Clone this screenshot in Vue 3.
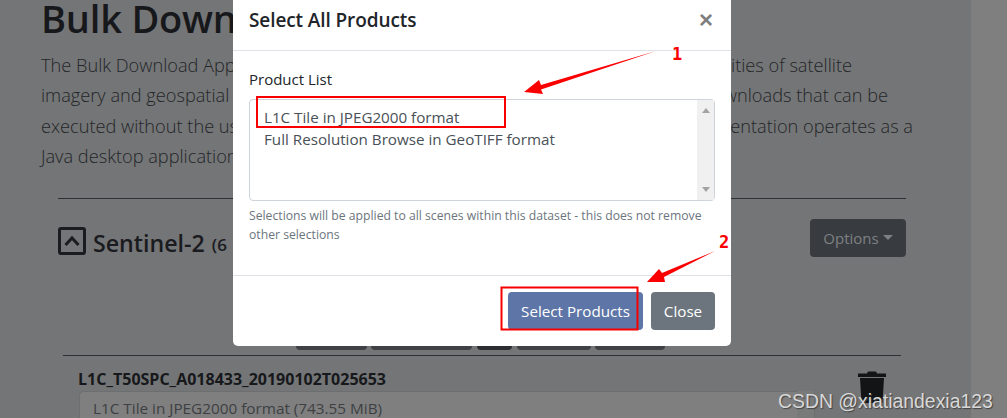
<script setup>
const lines = [
  { left: 'The Bulk Download Application extends', right: 'capabilities of satellite', rc: 'r1' },
  { left: 'imagery and geospatial data through', right: 'downloads that can be', rc: 'r2' },
  { left: 'executed without the use of a browser.', right: 'implementation operates as a', rc: 'r3' },
  { left: 'Java desktop application.', right: '', rc: 'r4' },
]
const chips = ['c1', 'c2', 'c3', 'c4', 'c5']
</script>

<template>
  <div class="screen">
    <main class="page">
      <h1 class="title">Bulk Download Application</h1>
      <div class="lead">
        <div v-for="l in lines" :key="l.left" class="lead-line" :class="l.rc">
          <span>{{ l.left }}</span><span>{{ l.right }}</span>
        </div>
      </div>
      <section class="dataset">
        <div class="dataset-head">
          <div class="dataset-name">
            <span class="toggle">
              <svg width="18" height="12" viewBox="0 0 18 12"><path d="M2.5 10 L9 3 L15.5 10" fill="none" stroke="#1b1c20" stroke-width="3"/></svg>
            </span>
            <span class="name-text">Sentinel-2</span>
            <span class="count">(6 scenes)</span>
          </div>
          <button class="options">Options<i class="caret"></i></button>
        </div>
        <div class="chips">
          <span v-for="c in chips" :key="c" class="chip" :class="c"></span>
        </div>
        <div class="scene">
          <div class="scene-main">
            <div class="scene-id">L1C_T50SPC_A018433_20190102T025653</div>
            <div class="scene-box">
              <span>L1C Tile in JPEG2000 format (743.55 MiB)</span>
              <span class="scene-bar"></span>
            </div>
          </div>
          <svg class="trash" width="28" height="32" viewBox="0 0 28 32">
            <path d="M0 2.5 H9 L10 0.5 H18 L19 2.5 H28 V6 H0 Z M2 7 H26 L24.5 32 H3.5 Z" fill="#131416"/>
          </svg>
        </div>
      </section>
    </main>
    <aside class="gutter"></aside>

    <div class="modal">
      <header class="modal-head">
        <h5>Select All Products</h5>
        <span class="close">×</span>
      </header>
      <div class="modal-body">
        <div class="label">Product List</div>
        <div class="list">
          <div class="list-items">
            <div>L1C Tile in JPEG2000 format</div>
            <div>Full Resolution Browse in GeoTIFF format</div>
          </div>
          <div class="sb">
            <i class="up"></i>
            <i class="down"></i>
          </div>
        </div>
        <small class="help">Selections will be applied to all scenes within this dataset - this does not remove other selections</small>
      </div>
      <footer class="modal-foot">
        <button class="btn primary">Select Products</button>
        <button class="btn secondary">Close</button>
      </footer>
    </div>

    <svg class="marks" width="1007" height="418" viewBox="0 0 1007 418">
      <rect x="257" y="97" width="248" height="30" fill="none" stroke="#f80000" stroke-width="2"/>
      <polygon points="656,51 541,85 539,80 524,92 543,94 541,89.5" fill="#fb0000"/>
      <text x="672" y="60" class="num">1</text>
      <rect x="501.5" y="287.5" width="136" height="42" fill="none" stroke="#f80000" stroke-width="2"/>
      <polygon points="715,251 662,273 659,269 647,282 665,282 664,277" fill="#fb0000"/>
      <text x="719" y="248" class="num">2</text>
    </svg>

    <div class="watermark">CSDN @xiatiandexia123</div>
  </div>
</template>

<style>
html, body { margin: 0; overflow: hidden; }
</style>

<style scoped>
.screen {
  position: relative;
  width: 1007px;
  height: 418px;
  overflow: hidden;
  display: flex;
  font-family: "Open Sans", "Noto Sans", sans-serif;
  background: #747576;
}
.page { width: 971px; flex: none; padding-left: 41px; box-sizing: border-box; }
.gutter { flex: 1; background: #7f7f7f; }
.title {
  margin: -6px 0 8px;
  font-size: 38px;
  line-height: 48px;
  font-weight: 600;
  color: #17181b;
  white-space: nowrap;
  letter-spacing: -0.2px;
}
.lead { width: 872px; color: #232529; font-size: 18.2px; font-weight: 300; line-height: 30.4px; }
.lead-line { display: flex; justify-content: space-between; white-space: nowrap; }
.r1 { width: 811px; }
.r2 { width: 847px; }
.r3 { width: 872px; }
.dataset { width: 848px; margin: 26px 0 0 17px; border-top: 1px solid #2e3034; }
.dataset-head { display: flex; justify-content: space-between; padding-top: 20px; }
.dataset-name { display: flex; align-items: center; height: 38px; padding-top: 9px; box-sizing: border-box; }
.toggle {
  width: 28px; height: 28px; box-sizing: border-box;
  border: 3px solid #1b1c20; border-radius: 3px;
  display: flex; align-items: center; justify-content: center;
  margin-right: 7px; margin-top: -3px;
}
.name-text { font-size: 23.2px; font-weight: 600; color: #1a1b1f; margin: 1px 7px 0 0; white-space: nowrap; }
.count { font-size: 17px; font-weight: 600; color: #1a1b1f; margin-top: 4px; white-space: nowrap; word-spacing: 6px; }
.options {
  width: 96px; height: 38px; border: 0; border-radius: 4px; padding: 0;
  background: #383b3f; color: #7d8083;
  font: 15px "Open Sans", sans-serif;
  display: flex; align-items: center; justify-content: center;
}
.caret {
  width: 0; height: 0; margin-left: 4px;
  border: 5px solid transparent; border-top-color: #7d8083; border-bottom: 0;
}
.chips { display: flex; margin: 55px 0 0 238px; gap: 4px; height: 38px; }
.chip { height: 38px; border-radius: 4px; background: #3f4145; }
.c1 { width: 71px; }
.c2 { width: 101px; }
.c3 { width: 35px; margin-left: 1px; background: #2c2d30; }
.c4 { width: 74px; margin-left: 1px; }
.c5 { width: 70px; }
.scene {
  margin: 5px 5px 0;
  border-top: 1px solid #2e3034;
  display: flex;
  padding: 13px 0 0 16px;
}
.scene-main { width: 736px; }
.scene-id { font-size: 16px; line-height: 20px; font-weight: 700; color: #17181b; white-space: nowrap; margin-left: -1px; }
.scene-box {
  margin-top: 2px;
  height: 36px;
  box-sizing: border-box;
  padding: 5px 0 0 13px;
  background: #7f7f7f;
  border: 1px solid #6d6e6f;
  border-radius: 4px 0 0 0;
  color: #3d3f43;
  font-size: 15.3px;
  line-height: 22px;
  display: flex;
  justify-content: space-between;
  white-space: nowrap;
}
.scene-bar { width: 17px; margin-top: -6px; background: #797a7a; }
.trash { margin: 2px 0 0 43px; flex: none; }

.modal {
  position: absolute;
  left: 233px;
  top: -11px;
  width: 498px;
  background: #fff;
  border-radius: 5px;
  color: #212529;
}
.modal-head {
  height: 62px; box-sizing: border-box; padding: 16px;
  border-bottom: 1px solid #dee2e6;
  display: flex; justify-content: space-between;
}
.modal-head h5 { margin: 0; font-size: 19px; line-height: 30px; font-weight: 600; white-space: nowrap; letter-spacing: -0.1px; }
.close { font: 700 24px/30px "Liberation Sans", sans-serif; color: #7f7f7f; margin: 0 2px 0 0; }
.modal-body { padding: 16px 16px 30.6px; }
.label { font-size: 15px; line-height: 24px; margin-bottom: 8px; }
.list {
  height: 102px; box-sizing: border-box;
  border: 1px solid #ced4da; border-radius: 4px;
  display: flex; justify-content: space-between;
  color: #495057; font-size: 15.2px; line-height: 22px;
}
.list-items { padding: 6px 0 0 14px; white-space: nowrap; }
.sb { width: 17px; background: #f0f0f0; display: flex; flex-direction: column; justify-content: space-between; align-items: center; padding: 8px 0; box-sizing: border-box; }
.up { width: 0; height: 0; border: 4px solid transparent; border-bottom: 5px solid #a3a3a3; border-top: 0; }
.down { width: 0; height: 0; border: 4px solid transparent; border-top: 5px solid #a3a3a3; border-bottom: 0; }
.help { display: block; margin-top: 5px; font-size: 12.2px; line-height: 19.2px; color: #6c757d; width: 465px; }
.modal-foot {
  border-top: 1px solid #dee2e6;
  padding: 16px;
  display: flex; justify-content: flex-end; gap: 8px;
}
.btn {
  height: 38px; border: 0; border-radius: 4px; padding: 0;
  color: #fff; font: 15.2px "Open Sans", sans-serif;
}
.primary { width: 135px; background: #5e75a7; }
.secondary { width: 64px; background: #6c757d; }

.marks { position: absolute; left: 0; top: 0; pointer-events: none; }
.num { font: 700 17px "DejaVu Sans Mono", monospace; fill: #fb0000; }
.watermark {
  position: absolute; left: 778px; top: 390px;
  font: 19.4px/22px "Liberation Sans", sans-serif;
  color: #d8d8d8;
  text-shadow: 1px 1px 1px #444;
  white-space: nowrap;
}
</style>
